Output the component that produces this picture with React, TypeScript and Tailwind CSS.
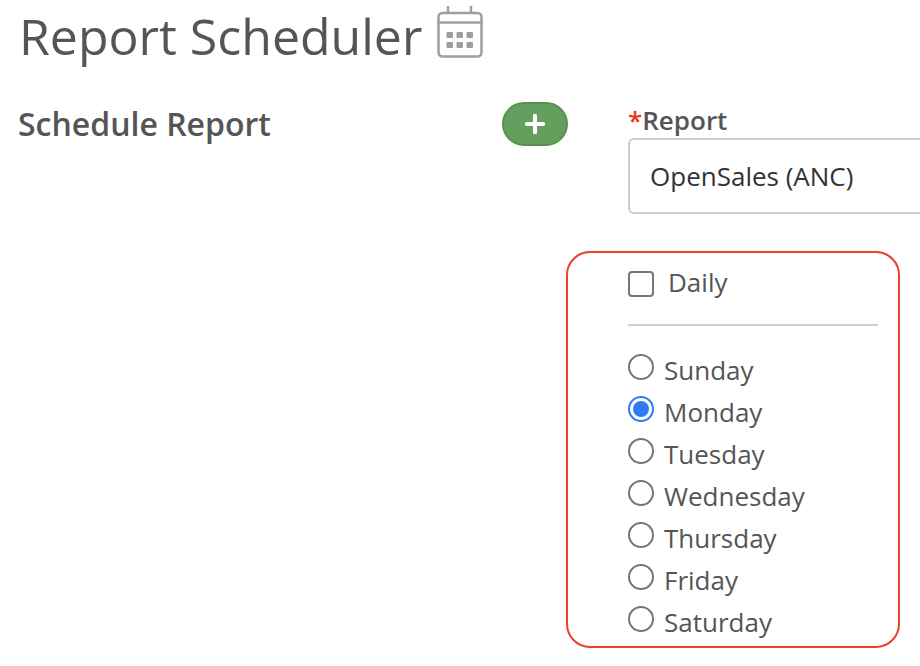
import { Plus } from 'lucide-react';

const days = ['Sunday', 'Monday', 'Tuesday', 'Wednesday', 'Thursday', 'Friday', 'Saturday'];

function CalendarIcon() {
  return (
    <svg width="46" height="54" viewBox="0 0 46 54" fill="none">
      <rect x="1.5" y="8" width="43" height="43.5" rx="4" stroke="#9e9e9e" strokeWidth="2.5" />
      <path d="M1.5 17.5H44.5" stroke="#9e9e9e" strokeWidth="2.5" />
      <path d="M11 1V8M34 1V8" stroke="#9e9e9e" strokeWidth="2.5" />
      <g fill="#9e9e9e">
        <rect x="9.5" y="27" width="6.5" height="6" rx="1" />
        <rect x="19.5" y="27" width="6.5" height="6" rx="1" />
        <rect x="29.5" y="27" width="6.5" height="6" rx="1" />
        <rect x="9.5" y="37" width="6.5" height="6" rx="1" />
        <rect x="19.5" y="37" width="6.5" height="6" rx="1" />
        <rect x="29.5" y="37" width="6.5" height="6" rx="1" />
      </g>
    </svg>
  );
}

export default function App() {
  return (
    <div className="w-[920px] h-[666px] overflow-hidden bg-white text-[#555555] font-['Open_Sans',sans-serif]">
      {/* Title */}
      <div className="flex items-start gap-[15px] pl-[19px] h-[72px]">
        <h1 className="text-[50px] leading-[72px] font-normal whitespace-nowrap">Report Scheduler</h1>
        <div className="pt-[5px]">
          <CalendarIcon />
        </div>
      </div>

      <div className="flex">
        {/* Left column */}
        <div className="w-[502px] shrink-0 pl-[18px] pt-[31px]">
          <h2 className="text-[32px] leading-[42px] font-semibold whitespace-nowrap">Schedule Report</h2>
        </div>

        <div className="flex flex-col">
          <div className="flex">
            <div className="w-[126px] shrink-0 pt-[30px]">
              <button className="w-[66px] h-[44px] rounded-full bg-[#659f5e] border-2 border-[#58914f] flex items-center justify-center">
                <Plus className="w-[28px] h-[28px] text-white" strokeWidth={3.5} />
              </button>
            </div>
            <div className="pt-[31px]">
              <label className="block text-[26px] leading-[35px] font-semibold whitespace-nowrap">
                <span className="text-[#f0321e]">*</span>Report
              </label>
              <div className="w-[400px] h-[76px] border-2 border-[#cccccc] rounded-[6px] flex items-center pl-[20px] text-[26px] text-[#333333]">
                OpenSales (ANC)
              </div>
            </div>
          </div>

          {/* Frequency box */}
          <div className="mt-[37px] ml-[64px] w-[334px] h-[397px] border-2 border-[#e8432d] rounded-[24px] pl-[60px] pr-[20px] pt-[12px]">
            <div className="flex items-center gap-[14px] h-[38px]">
              <span className="w-[26px] h-[26px] border-2 border-[#767676] rounded-[4px] bg-white" />
              <span className="text-[26px] leading-[34px] mt-[-5px]">Daily</span>
            </div>
            <div className="mt-[21px] mb-[28px] h-[2px] bg-[#d0d0d0]" />
            {days.map((day) => (
              <div key={day} className="flex gap-[10px] h-[42px]">
                {day === 'Monday' ? (
                  <span className="w-[26px] h-[26px] rounded-full border-2 border-[#2f7bf6] bg-white flex items-center justify-center">
                    <span className="w-[16px] h-[16px] rounded-full bg-[#2f7bf6]" />
                  </span>
                ) : (
                  <span className="w-[26px] h-[26px] rounded-full border-2 border-[#767676] bg-white" />
                )}
                <span className="text-[26px] leading-[34px] mt-[-1px] whitespace-nowrap">{day}</span>
              </div>
            ))}
          </div>
        </div>
      </div>
    </div>
  );
}
